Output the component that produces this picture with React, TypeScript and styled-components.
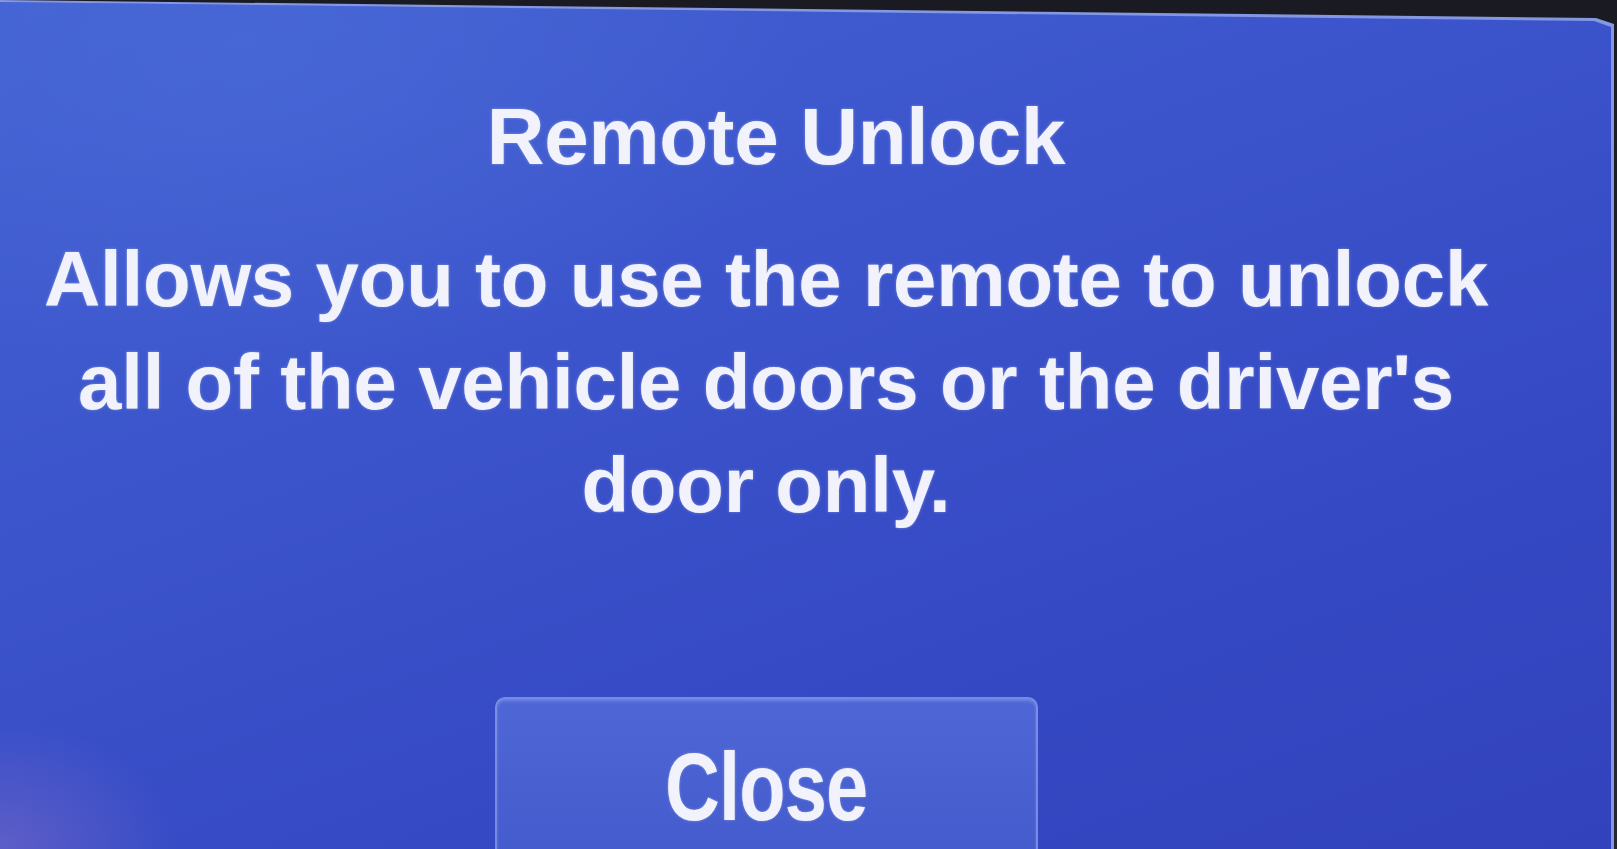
import React from "react";
import styled, { createGlobalStyle } from "styled-components";

const GlobalStyle = createGlobalStyle`
  html, body {
    margin: 0;
    padding: 0;
    width: 100%;
    height: 100%;
    overflow: hidden;
    background: #1b1c24;
  }
  #root {
    width: 100%;
    height: 100%;
  }
`;

/* Dark bezel around the display */
const Rim = styled.div`
  width: 1617px;
  height: 849px;
  background: linear-gradient(180deg, #1a1b22 0%, #25262f 100%);
  display: flex;
`;

/* Thin lit edge of the glass */
const Glass = styled.div`
  flex: 1;
  display: flex;
  background: #8497e2;
  clip-path: polygon(0 0, 1596px 18px, 1614px 24px, 1614px 100%, 0 100%);
`;

const Screen = styled.main`
  flex: 1;
  display: flex;
  flex-direction: column;
  align-items: center;
  padding: 97px 85px 0 0;
  box-sizing: border-box;
  overflow: hidden;
  clip-path: polygon(0 2px, 1594px 21px, 1611px 27px, 1611px 100%, 0 100%);
  background:
    radial-gradient(ellipse 220px 160px at 0% 100%, rgba(120, 105, 200, 0.6), rgba(120, 105, 200, 0) 80%),
    radial-gradient(ellipse 700px 420px at 15% 5%, rgba(74, 106, 216, 0.7), rgba(74, 106, 216, 0) 80%),
    linear-gradient(160deg, #4462d2 0%, #3c55cc 35%, #3549c4 70%, #3242bc 100%);
  font-family: "Liberation Sans", Arial, sans-serif;
  color: #f1f2fb;
  text-shadow: 0 0 3px rgba(255, 255, 255, 0.35);
`;

const Title = styled.h1`
  margin: 0 0 0 20px;
  font-size: 80px;
  line-height: 80px;
  font-weight: 700;
  letter-spacing: -0.3px;
  text-align: center;
`;

const Message = styled.p`
  margin: 51px 0 0;
  font-size: 78px;
  line-height: 103px;
  font-weight: 700;
  letter-spacing: -0.2px;
  text-align: center;
  white-space: nowrap;
`;

const Actions = styled.div`
  margin-top: 160px;
  display: flex;
  justify-content: center;
`;

const CloseButton = styled.button`
  width: 543px;
  height: 220px;
  padding: 40px 0 0;
  box-sizing: border-box;
  display: flex;
  justify-content: center;
  align-items: flex-start;
  border: 2px solid rgba(140, 160, 235, 0.7);
  border-bottom: none;
  border-radius: 10px 10px 0 0;
  background: linear-gradient(180deg, #4f67d6 0%, #4860d0 40%, #4058ca 100%);
  box-shadow: inset 0 2px 3px rgba(190, 205, 255, 0.3);
  color: #f1f2fb;
  font-family: "Liberation Sans", Arial, sans-serif;
  font-size: 96px;
  line-height: 96px;
  font-weight: 700;
  text-shadow: 0 0 3px rgba(255, 255, 255, 0.35);
  cursor: pointer;
`;

/* The label face on the head unit is a condensed cut */
const Label = styled.span`
  display: inline-block;
  transform: scaleX(0.79);
  letter-spacing: -1px;
`;

export default function App() {
  return (
    <>
      <GlobalStyle />
      <Rim>
        <Glass>
          <Screen>
            <Title>Remote Unlock</Title>
            <Message>
              Allows you to use the remote to unlock
              <br />
              all of the vehicle doors or the driver's
              <br />
              door only.
            </Message>
            <Actions>
              <CloseButton type="button">
                <Label>Close</Label>
              </CloseButton>
            </Actions>
          </Screen>
        </Glass>
      </Rim>
    </>
  );
}
